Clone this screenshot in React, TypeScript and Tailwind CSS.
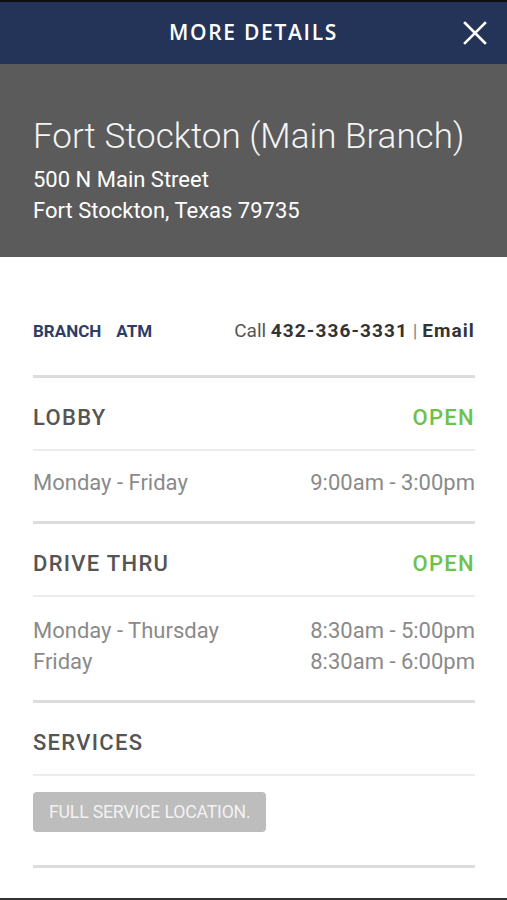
import React from "react";

interface HoursRow {
  days: string;
  time: string;
}

interface HoursSection {
  title: string;
  status: string;
  rows: HoursRow[];
}

const sections: HoursSection[] = [
  {
    title: "LOBBY",
    status: "OPEN",
    rows: [{ days: "Monday - Friday", time: "9:00am - 3:00pm" }],
  },
  {
    title: "DRIVE THRU",
    status: "OPEN",
    rows: [
      { days: "Monday - Thursday", time: "8:30am - 5:00pm" },
      { days: "Friday", time: "8:30am - 6:00pm" },
    ],
  },
];

function SectionHead({ title, status }: { title: string; status?: string }) {
  return (
    <div className="h-[73px] pt-[7px] flex items-center justify-between border-b-2 border-[#ececec]">
      <span className="text-[22px] font-medium tracking-[1.3px] text-[#555555]">{title}</span>
      {status && <span className="text-[22px] font-medium tracking-[1.3px] text-[#6cc24a]">{status}</span>}
    </div>
  );
}

export default function App() {
  return (
    <div className="w-[507px] h-[900px] bg-white overflow-hidden flex flex-col font-['Roboto','Liberation_Sans',sans-serif]">
      <header className="h-[64px] shrink-0 border-t-2 border-[#111111] bg-[#243459] flex items-center justify-center relative">
        <h1 className="text-[21px] font-semibold tracking-[1.7px] text-white font-['Open_Sans','DejaVu_Sans',sans-serif]">
          MORE DETAILS
        </h1>
        <button className="absolute right-[20px] top-[19px] w-[24px] h-[24px] text-white">
          <svg viewBox="0 0 24 24" className="w-full h-full" fill="none" stroke="currentColor" strokeWidth="2.6" strokeLinecap="square">
            <path d="M2 2 L22 22 M22 2 L2 22" />
          </svg>
        </button>
      </header>

      <section className="h-[193px] shrink-0 bg-[#5b5b5b] px-[33px] pt-[51px] text-white">
        <h2 className="text-[35px] font-light leading-[44px] text-[#f4f4f4]">Fort Stockton (Main Branch)</h2>
        <p className="text-[22px] leading-[31px] mt-[5px]">500 N Main Street</p>
        <p className="text-[22px] leading-[31px]">Fort Stockton, Texas 79735</p>
      </section>

      <main className="px-[33px] pr-[32px]">
        <div className="h-[121px] pt-[58px] flex justify-between border-b-[3px] border-[#dcdcdc]">
          <div className="flex gap-[15px] text-[17px] font-bold text-[#2e3d68] leading-[32px]">
            <span>BRANCH</span>
            <span>ATM</span>
          </div>
          <div className="text-[19px] text-[#555555] leading-[32px]">
            Call <span className="font-bold tracking-[1.1px] text-[#333333]">432-336-3331</span>{" "}
            <span className="text-[#888888]">|</span> <span className="font-bold tracking-[1.1px] text-[#333333]">Email</span>
          </div>
        </div>

        {sections.map((s) => (
          <div key={s.title}>
            <SectionHead title={s.title} status={s.status} />
            <div
              className={`flex flex-col justify-center border-b-[3px] border-[#dcdcdc] ${
                s.rows.length > 1 ? "h-[106px] pb-[6px]" : "h-[73px] pb-[7px]"
              }`}
            >
              {s.rows.map((r) => (
                <div key={r.days} className="flex justify-between text-[22px] leading-[31px] text-[#8a8a8a]">
                  <span>{r.days}</span>
                  <span>{r.time}</span>
                </div>
              ))}
            </div>
          </div>
        ))}

        <SectionHead title="SERVICES" />
        <div className="pt-[16px] pb-[33px] border-b-[3px] border-[#dcdcdc]">
          <span className="inline-flex items-center h-[40px] px-[16px] rounded-[4px] bg-[#bdbdbd] text-[17.7px] text-[#f2f2f2] tracking-[-0.2px]">
            FULL SERVICE LOCATION.
          </span>
        </div>
      </main>

      <div className="mt-auto h-[2px] bg-[#333333]" />
    </div>
  );
}
